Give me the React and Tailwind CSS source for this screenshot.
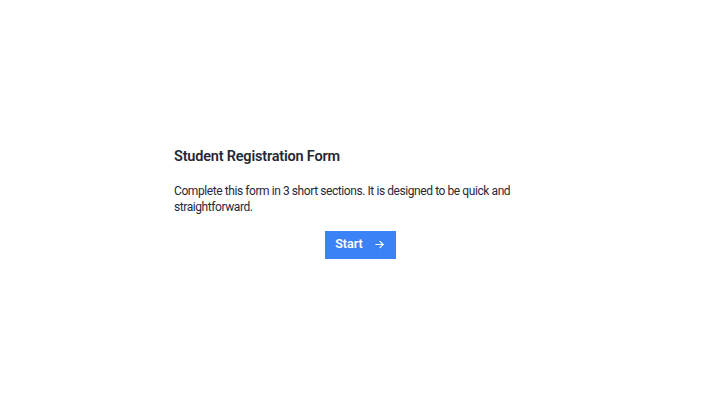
import React from "react";

export default function App() {
  return (
    <div
      className="w-[720px] h-[405px] bg-white flex items-center justify-center text-[#1f2937]"
      style={{ fontFamily: 'Roboto, "Noto Sans", sans-serif' }}
    >
      <div className="w-[372px] flex flex-col">
        <h1 className="text-[14.5px] leading-[20px] font-semibold tracking-[-0.2px]">Student Registration Form</h1>
        <p className="mt-[16px] text-[12px] leading-[16px] tracking-[-0.42px]">
          Complete this form in 3 short sections. It is designed to be quick and straightforward.
        </p>
        <div className="mt-[16px] flex justify-center">
          <button className="h-[28px] w-[71px] bg-[#3b82f6] text-white text-[12.5px] font-semibold flex items-center justify-center gap-[11px]">
            <span>Start</span>
            <svg width="11" height="11" viewBox="0 0 24 24" fill="none" stroke="currentColor" strokeWidth="2.5" strokeLinecap="round" strokeLinejoin="round">
              <path d="M4 12h16" />
              <path d="M13 5l7 7-7 7" />
            </svg>
          </button>
        </div>
      </div>
    </div>
  );
}
